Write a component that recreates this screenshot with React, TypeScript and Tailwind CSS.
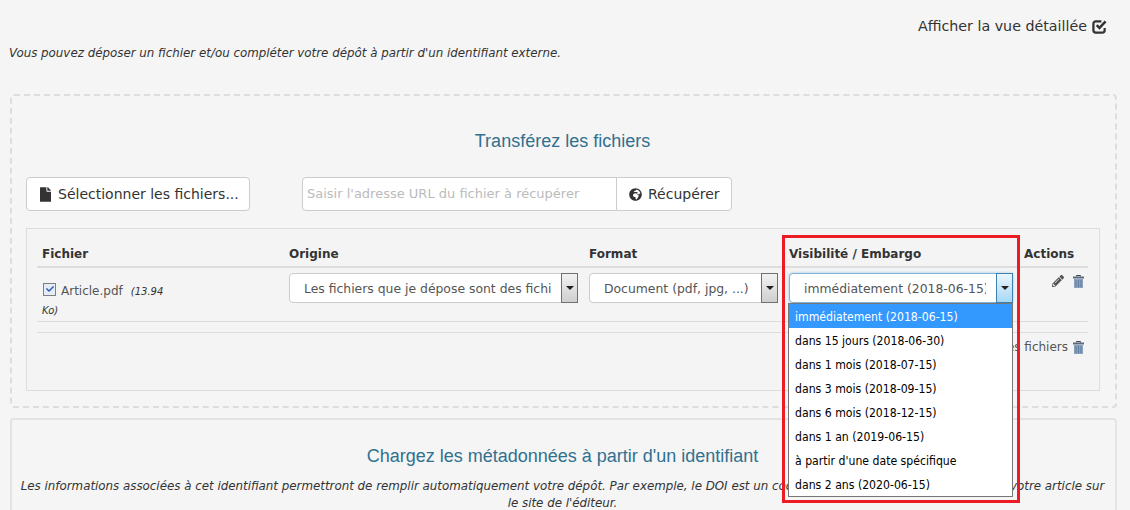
import React from 'react';
import { FaFile, FaGlobeAfrica, FaPencilAlt, FaCheck } from 'react-icons/fa';

const options = [
  'immédiatement (2018-06-15)',
  'dans 15 jours (2018-06-30)',
  'dans 1 mois (2018-07-15)',
  'dans 3 mois (2018-09-15)',
  'dans 6 mois (2018-12-15)',
  'dans 1 an (2019-06-15)',
  "à partir d'une date spécifique",
  'dans 2 ans (2020-06-15)',
];

function TrashIcon() {
  return (
    <svg width="11" height="13" viewBox="0 0 11 13" className="shrink-0">
      <path d="M3.5 1.5V.5h4v1" fill="none" stroke="#444" strokeWidth="1" />
      <rect x="0" y="1.5" width="11" height="2" fill="#5a6a80" />
      <rect x="1" y="4" width="9" height="9" fill="#8aa2bf" />
      <path d="M3 5v7M5.5 5v7M8 5v7" stroke="#5f7a9c" strokeWidth="1" />
    </svg>
  );
}

function SelectBox({ label, active }: { label: string; active?: boolean }) {
  return (
    <div className={`flex h-[30px] w-full items-stretch rounded-[4px] border bg-white ${active ? 'border-[#7fb2dc] shadow-[0_0_3px_#9cc7ea]' : 'border-[#ccc]'}`}>
      <div className="ml-[14px] mr-[10px] flex-1 overflow-hidden whitespace-nowrap text-[12.4px] leading-[29px] text-[#555]">{label}</div>
      <div className={`-my-px -mr-px flex w-[17px] shrink-0 items-center justify-center border ${active ? 'border-[#3c7fb1] bg-gradient-to-b from-[#eaf6fd] to-[#a7d8f5]' : 'border-[#707070] bg-gradient-to-b from-[#f2f2f2] to-[#cfcfcf]'}`}>
        <div className="h-0 w-0 border-x-[4px] border-t-[4px] border-x-transparent border-t-[#222]" />
      </div>
    </div>
  );
}

export default function App() {
  return (
    <div className="relative h-[510px] w-[1130px] overflow-hidden bg-[#f5f5f5] font-['DejaVu_Sans',sans-serif] text-[#333]">
      <div className="flex items-center justify-end gap-[5px] pr-[23px] pt-[16px] text-[14.25px] leading-[20px]">
        <span>Afficher la vue détaillée</span>
        <svg width="15" height="15" viewBox="0 0 16 16" fill="none" stroke="#333" strokeWidth="2.4">
          <path d="M13.5 9.5V12a2.5 2.5 0 0 1-2.5 2.5H4A2.5 2.5 0 0 1 1.5 12V5A2.5 2.5 0 0 1 4 2.5h6" />
          <path d="M5 6.5l3 3 6.5-7" strokeWidth="2.6" />
        </svg>
      </div>
      <p className="mt-[9px] pl-[9px] text-[11.85px] italic leading-[17px]">
        Vous pouvez déposer un fichier et/ou compléter votre dépôt à partir d'un identifiant externe.
      </p>

      <div className="mx-[10px] mt-[32px] h-[314px] w-[1107px] rounded-[4px] border-2 border-dashed border-[#ddd] pl-[14px] pr-[16px] pt-[34px]">
        <h2 className="text-center font-['Liberation_Sans',sans-serif] text-[18px] leading-[22px] text-[#31708f]">Transférez les fichiers</h2>
        <div className="mt-[25px] flex items-stretch">
          <button className="flex h-[34px] w-[224px] items-center gap-[7px] rounded-[4px] border border-[#ccc] bg-white pl-[13px] text-[14px]">
            <FaFile className="h-[15px] w-[11px]" />
            <span>Sélectionner les fichiers...</span>
          </button>
          <div className="ml-[52px] flex h-[34px] w-[430px]">
            <div className="flex w-[315px] items-center rounded-l-[4px] border border-[#ccc] bg-white pl-[4px] text-[13px] text-[#bbb]">
              Saisir l'adresse URL du fichier à récupérer
            </div>
            <button className="-ml-px flex flex-1 items-center gap-[6px] rounded-r-[4px] border border-[#ccc] bg-white pl-[12px] text-[14px]">
              <FaGlobeAfrica className="h-[13px] w-[13px]" />
              <span>Récupérer</span>
            </button>
          </div>
        </div>

        <div className="mt-[17px] h-[163px] w-[1074px] border border-[#ddd] bg-[#f4f4f4] pl-[10px] pr-[11px]">
          <div className="grid grid-cols-[248px_300px_200px_235px_1fr] border-b-2 border-[#ddd] pb-[3px] pt-[17px] text-[12px] font-bold leading-[17px]">
            <div className="pl-[5px]">Fichier</div>
            <div className="px-[4px]">Origine</div>
            <div className="px-[4px]">Format</div>
            <div className="px-[4px]">Visibilité / Embargo</div>
            <div className="px-[4px]">Actions</div>
          </div>
          <div className="grid h-[54px] grid-cols-[248px_300px_200px_235px_1fr] border-b border-[#ddd] pt-[5px]">
            <div className="pl-[5px] pt-[9px] text-[12px] leading-[19px]">
              <span className="mr-[5px] ml-px inline-flex h-[13px] w-[13px] items-center justify-center border border-[#808080] bg-[#e6ecf6] align-[2px] text-[#2f5fb0]">
                <FaCheck className="h-[8px] w-[8px]" />
              </span>
              <span className="text-[#555]">Article.pdf</span>
              <span className="ml-[8px] text-[10px] italic">(13.94<br />Ko)</span>
            </div>
            <div className="pl-[4px] pr-[7px]"><SelectBox label="Les fichiers que je dépose sont des fichiers" /></div>
            <div className="pl-[4px] pr-[7px]"><SelectBox label="Document (pdf, jpg, ...)" /></div>
            <div className="pl-[4px] pr-[7px]"><SelectBox label="immédiatement (2018-06-15)" active /></div>
            <div className="flex justify-end gap-[9px] pr-[4px] pt-[2px]">
              <FaPencilAlt className="h-[12px] w-[12px] text-[#555]" />
              <TrashIcon />
            </div>
          </div>
          <div className="mt-[10px] flex items-center justify-end gap-[5px] border-t border-[#ddd] pr-[4px] pt-[6px] text-[12px] leading-[17px] text-[#555]">
            <span>Supprimer tous les fichiers</span>
            <TrashIcon />
          </div>
        </div>
      </div>

      <div className="mx-[10px] mt-[10px] h-[120px] w-[1107px] rounded-[4px] border-2 border-[#e3e3e3] pl-[8px] pr-[10px] pt-[25px]">
        <h2 className="text-center font-['Liberation_Sans',sans-serif] text-[18px] leading-[22px] text-[#31708f]">Chargez les métadonnées à partir d'un identifiant</h2>
        <p className="mt-[11px] whitespace-nowrap text-center text-[11.85px] italic leading-[17px]">
          Les informations associées à cet identifiant permettront de remplir automatiquement votre dépôt. Par exemple, le DOI est un code qui permet de retrouver aisément votre article sur<br />le site de l'éditeur.
        </p>
      </div>

      {/* liste ouverte du select */}
      <div className="absolute left-[788px] top-[303px] w-[225px] border border-[#767676] bg-white font-['DejaVu_Sans_Condensed','DejaVu_Sans',sans-serif] text-[12.15px] text-black">
        {options.map((o, i) => (
          <div key={o} className={`h-[24px] pl-[6px] leading-[26px] ${i === 0 ? 'bg-[#3399ff] text-white' : ''}`}>{o}</div>
        ))}
      </div>
      {/* encadré rouge */}
      <div className="pointer-events-none absolute left-[782px] top-[235px] h-[268px] w-[238px] border-[3px] border-[#ed1c24]" />
    </div>
  );
}
